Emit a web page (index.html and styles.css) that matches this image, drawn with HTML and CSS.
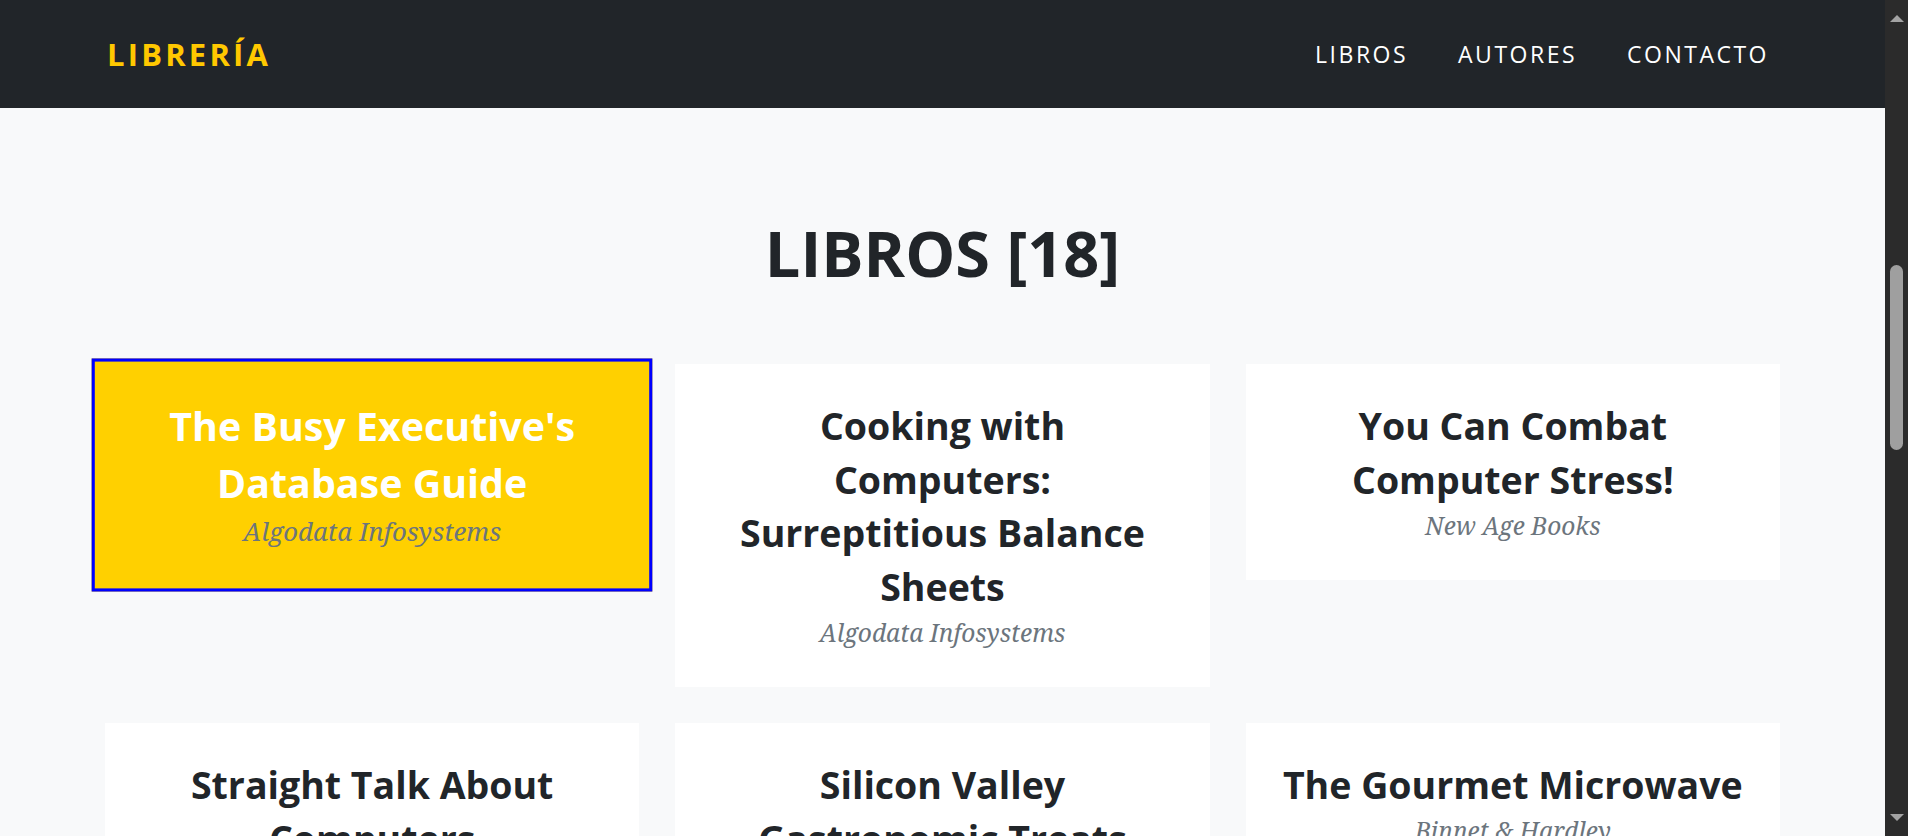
FILE: index.html
```html
<!DOCTYPE html>
<html lang="es">
<head>
<meta charset="utf-8">
<title>Librería</title>
<link rel="stylesheet" href="styles.css">
</head>
<body>
<div class="app">
  <div class="page">
    <header class="navbar">
      <a class="brand" href="#">LIBRERÍA</a>
      <nav class="nav">
        <a class="nav-link" href="#">LIBROS</a>
        <a class="nav-link" href="#">AUTORES</a>
        <a class="nav-link" href="#">CONTACTO</a>
      </nav>
    </header>
    <main class="section">
      <h1 class="section-heading">LIBROS [18]</h1>
      <div class="grid">
        <div class="card card-active"><h3 class="card-title">The Busy Executive's Database Guide</h3><p class="card-author">Algodata Infosystems</p></div>
        <div class="card"><h3 class="card-title">Cooking with Computers: Surreptitious Balance Sheets</h3><p class="card-author">Algodata Infosystems</p></div>
        <div class="card"><h3 class="card-title">You Can Combat Computer Stress!</h3><p class="card-author">New Age Books</p></div>
        <div class="card"><h3 class="card-title">Straight Talk About Computers</h3><p class="card-author">Algodata Infosystems</p></div>
        <div class="card"><h3 class="card-title">Silicon Valley Gastronomic Treats</h3><p class="card-author">Binnet &amp; Hardley</p></div>
        <div class="card"><h3 class="card-title">The Gourmet Microwave</h3><p class="card-author">Binnet &amp; Hardley</p></div>
        <div class="card"><h3 class="card-title">The Psychology of Computer Cooking</h3><p class="card-author">Binnet &amp; Hardley</p></div>
        <div class="card"><h3 class="card-title">But Is It User Friendly?</h3><p class="card-author">Algodata Infosystems</p></div>
        <div class="card"><h3 class="card-title">Secrets of Silicon Valley</h3><p class="card-author">Algodata Infosystems</p></div>
        <div class="card"><h3 class="card-title">Net Etiquette</h3><p class="card-author">Algodata Infosystems</p></div>
        <div class="card"><h3 class="card-title">Computer Phobic AND Non-Phobic Individuals: Behavior Variations</h3><p class="card-author">Binnet &amp; Hardley</p></div>
        <div class="card"><h3 class="card-title">Is Anger the Enemy?</h3><p class="card-author">New Age Books</p></div>
        <div class="card"><h3 class="card-title">Life Without Fear</h3><p class="card-author">New Age Books</p></div>
        <div class="card"><h3 class="card-title">Prolonged Data Deprivation: Four Case Studies</h3><p class="card-author">New Age Books</p></div>
        <div class="card"><h3 class="card-title">Emotional Security: A New Algorithm</h3><p class="card-author">New Age Books</p></div>
        <div class="card"><h3 class="card-title">Onions, Leeks, and Garlic: Cooking Secrets of the Mediterranean</h3><p class="card-author">Binnet &amp; Hardley</p></div>
        <div class="card"><h3 class="card-title">Fifty Years of Buckingham Palace Kitchens</h3><p class="card-author">Binnet &amp; Hardley</p></div>
        <div class="card"><h3 class="card-title">Sushi, Anyone?</h3><p class="card-author">Binnet &amp; Hardley</p></div>
      </div>
    </main>
  </div>
  <div class="scrollbar" aria-hidden="true">
    <div class="sb-arrow sb-up"></div>
    <div class="sb-track"><div class="sb-thumb"></div></div>
    <div class="sb-arrow sb-down"></div>
  </div>
</div>
</body>
</html>
```
FILE: styles.css
```css
html, body {
  margin: 0;
  padding: 0;
  height: 100%;
  overflow: hidden;
}
body {
  font-family: "Open Sans", "Liberation Sans", sans-serif;
  color: #212529;
  background: #f8f9fa;
}
.app {
  display: flex;
  height: 100vh;
}
.page {
  flex: 1;
  min-width: 0;
  overflow: hidden;
  background: #f8f9fa;
}

/* navbar */
.navbar {
  height: 108px;
  background: #212529;
  display: flex;
  align-items: center;
  justify-content: space-between;
  padding: 0 91px 0 107px;
}
.brand {
  font-family: "Open Sans", sans-serif;
  font-weight: 700;
  font-size: 31px;
  letter-spacing: 3.2px;
  color: #ffc800;
  text-decoration: none;
}
.nav {
  display: flex;
  align-items: center;
}
.nav-link {
  font-family: "Open Sans", sans-serif;
  font-weight: 400;
  font-size: 23px;
  letter-spacing: 2.5px;
  color: #ffffff;
  text-decoration: none;
  padding: 0 25px;
}

/* section */
.section {
  padding-top: 107px;
}
.section-heading {
  margin: 0;
  text-align: center;
  font-family: "Open Sans", sans-serif;
  font-weight: 700;
  font-size: 63px;
  line-height: 75px;
  color: #212529;
}
.grid {
  width: 1675px;
  margin: 74px auto 0;
  display: grid;
  grid-template-columns: repeat(3, 1fr);
  column-gap: 36px;
  row-gap: 36px;
  align-items: start;
}
.card {
  background: #ffffff;
  padding: 35px 34px 36px;
  text-align: center;
}
.card-title {
  margin: 0;
  font-family: "Open Sans", sans-serif;
  font-weight: 700;
  font-size: 37.5px;
  line-height: 53.5px;
  color: #212529;
}
.card-author {
  margin: 1.5px 0 0;
  font-family: "Noto Serif", "DejaVu Serif", serif;
  font-style: italic;
  font-size: 24.5px;
  line-height: 36.75px;
  color: #6c757d;
}
.card-active {
  background: #ffd000;
  border: 3px solid #0000ff;
  transform: scale(1.05);
}
.card-active .card-title {
  color: #ffffff;
}

/* fake scrollbar */
.scrollbar {
  width: 23px;
  flex: none;
  background: #2b2b2b;
  display: flex;
  flex-direction: column;
  align-items: center;
}
.sb-arrow {
  height: 30px;
  width: 23px;
  display: flex;
  align-items: center;
  justify-content: center;
}
.sb-up::before {
  content: "";
  border-left: 7px solid transparent;
  border-right: 7px solid transparent;
  border-bottom: 7px solid #a3a3a3;
  margin-top: 6px;
}
.sb-down::before {
  content: "";
  border-left: 7px solid transparent;
  border-right: 7px solid transparent;
  border-top: 7px solid #a3a3a3;
  margin-top: -8px;
}
.sb-track {
  flex: 1;
  width: 23px;
  display: flex;
  justify-content: center;
}
.sb-thumb {
  width: 13px;
  height: 185px;
  margin-top: 235px;
  border-radius: 7px;
  background: #9f9f9f;
}
```
